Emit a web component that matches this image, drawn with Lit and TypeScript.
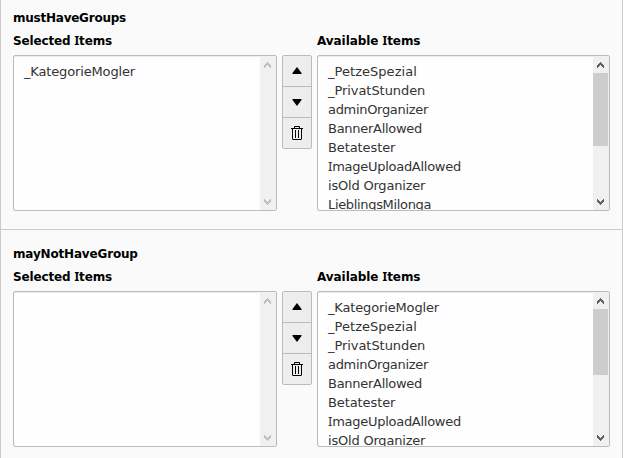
import { LitElement, html, css, svg } from "lit";
import { customElement, property } from "lit/decorators.js";

// Per-label tracking in px, so the substitute face keeps Verdana's advance widths.
const tracking: Record<string, number> = {
  _KategorieMogler: -0.15,
  _PetzeSpezial: 0.04,
  _PrivatStunden: -0.06,
  adminOrganizer: -0.31,
  BannerAllowed: -0.28,
  Betatester: -0.1,
  ImageUploadAllowed: -0.27,
  "isOld Organizer": -0.2,
  LieblingsMilonga: -0.33,
  mustHaveGroups: -0.24,
  mayNotHaveGroup: -0.17,
  "Selected Items": -0.14,
  "Available Items": -0.06,
};

const label = (text: string) => html`<span style="letter-spacing:${tracking[text] ?? 0}px">${
  text.split(/(I)/).map((p) => (p === "I" ? html`<span class="cap">I</span>` : p))}</span>`;

const textStyles = css`
  .cap { font-family: "Noto Sans", sans-serif; line-height: 0; }
`;

@customElement("scroll-list")
class ScrollList extends LitElement {
  @property({ type: Array }) items: string[] = [];
  @property({ type: Number }) thumb = 0;

  static styles = [textStyles, css`
    :host { display: flex; box-sizing: border-box; height: 156px; border: 1px solid #bbb; border-radius: 2px; background: #fefefe; overflow: hidden; box-shadow: inset 0 1px 1px rgba(0,0,0,.075); }
    .items { flex: 1; padding: 6px 0 0 10px; height: 148px; overflow: hidden; }
    .item { height: 19px; line-height: 19px; font-size: 13px; color: #333; white-space: pre; }
    .bar { width: 16px; display: flex; flex-direction: column; background: #f0f0f0; color: #bfbfbf; }
    .bar.active { color: #606060; }
    .bar svg { display: block; flex: none; }
    .track { flex: 1; }
    .thumb { width: 15px; background: #cdcdcd; }
  `];

  render() {
    const arrow = (d: string) => html`<svg width="16" height="17" viewBox="0 0 16 17" shape-rendering="crispEdges">${svg`<path d=${d} fill="currentColor"/>`}</svg>`;
    return html`
      <div class="items">${this.items.map((t) => html`<div class="item">${label(t)}</div>`)}</div>
      <div class="bar ${this.thumb ? "active" : ""}">
        ${arrow("M7 6h1v1h1v1h1v1h1v3h-1v-1h-1v-1h-1v-1h-1v1h-1v1h-1v1h-1v-3h1v-1h1v-1h1z")}
        <div class="track"><div class="thumb" style="height:${this.thumb}px"></div></div>
        ${arrow("M4 6h1v1h1v1h1v1h1v-1h1v-1h1v-1h1v3h-1v1h-1v1h-1v1h-1v-1h-1v-1h-1v-1h-1z")}
      </div>`;
  }
}

@customElement("group-field")
class GroupField extends LitElement {
  @property() name = "";
  @property({ type: Array }) selected: string[] = [];
  @property({ type: Array }) available: string[] = [];
  @property({ type: Number }) thumb = 0;

  static styles = [textStyles, css`
    :host { display: block; box-sizing: border-box; padding: 6px 12px 0; height: 229px; }
    .title, .label { font-size: 12px; font-weight: bold; line-height: 25px; color: #000; white-space: pre; }
    .title { height: 23px; }
    .label { height: 26px; }
    .row { display: grid; grid-template-columns: 264px 30px 293px; column-gap: 5px; }
    .buttons { align-self: start; box-sizing: border-box; border: 1px solid #bbb; border-radius: 2px; background: #ededed; }
    .button { display: block; box-sizing: border-box; width: 28px; height: 31px; padding: 0; border: 0; border-bottom: 1px solid #bbb; background: none; color: #000; }
    .button:last-child { height: 30px; border-bottom: 0; }
    .button svg { display: block; }
  `];

  render() {
    return html`
      <div class="title">${label(this.name)}</div>
      <div class="row">
        <div class="label">${label("Selected Items")}</div><div></div><div class="label">${label("Available Items")}</div>
        <scroll-list .items=${this.selected}></scroll-list>
        <div class="buttons">
          <button class="button" aria-label="Move up"><svg width="28" height="30"><path d="M14 11L18.500 17v1h-9v-1z"/></svg></button>
          <button class="button" aria-label="Move down"><svg width="28" height="30"><path d="M9.500 12h9v1L14 19L9.500 13z"/></svg></button>
          <button class="button" aria-label="Remove"><svg width="28" height="30" fill="none" stroke="#000"><path d="M8 10.500h12M11.500 10v-1.500h5V10M9.500 11v10q0 .5.5.5h8q.5 0 .5-.5V11M12.500 12v8M15.500 12v8"/></svg></button>
        </div>
        <scroll-list .items=${this.available} .thumb=${this.thumb}></scroll-list>
      </div>`;
  }
}

@customElement("app-root")
class AppRoot extends LitElement {
  static styles = css`
    :host { display: block; box-sizing: border-box; width: 623px; height: 458px; overflow: hidden; background: #fafafa; border: solid #ccc; border-width: 0 1px; font-family: "DejaVu Sans", sans-serif; }
    .divider { height: 1px; background: #ccc; }
    .second { padding-top: 12px; height: 228px; }
  `;

  render() {
    const names = ["_PetzeSpezial", "_PrivatStunden", "adminOrganizer", "BannerAllowed", "Betatester", "ImageUploadAllowed", "isOld Organizer", "LieblingsMilonga"];
    return html`
      <group-field name="mustHaveGroups" .selected=${["_KategorieMogler"]} .available=${names} .thumb=${73}></group-field>
      <div class="divider"></div>
      <group-field class="second" name="mayNotHaveGroup" .available=${["_KategorieMogler", ...names.slice(0, 7)]} .thumb=${66}></group-field>`;
  }
}
